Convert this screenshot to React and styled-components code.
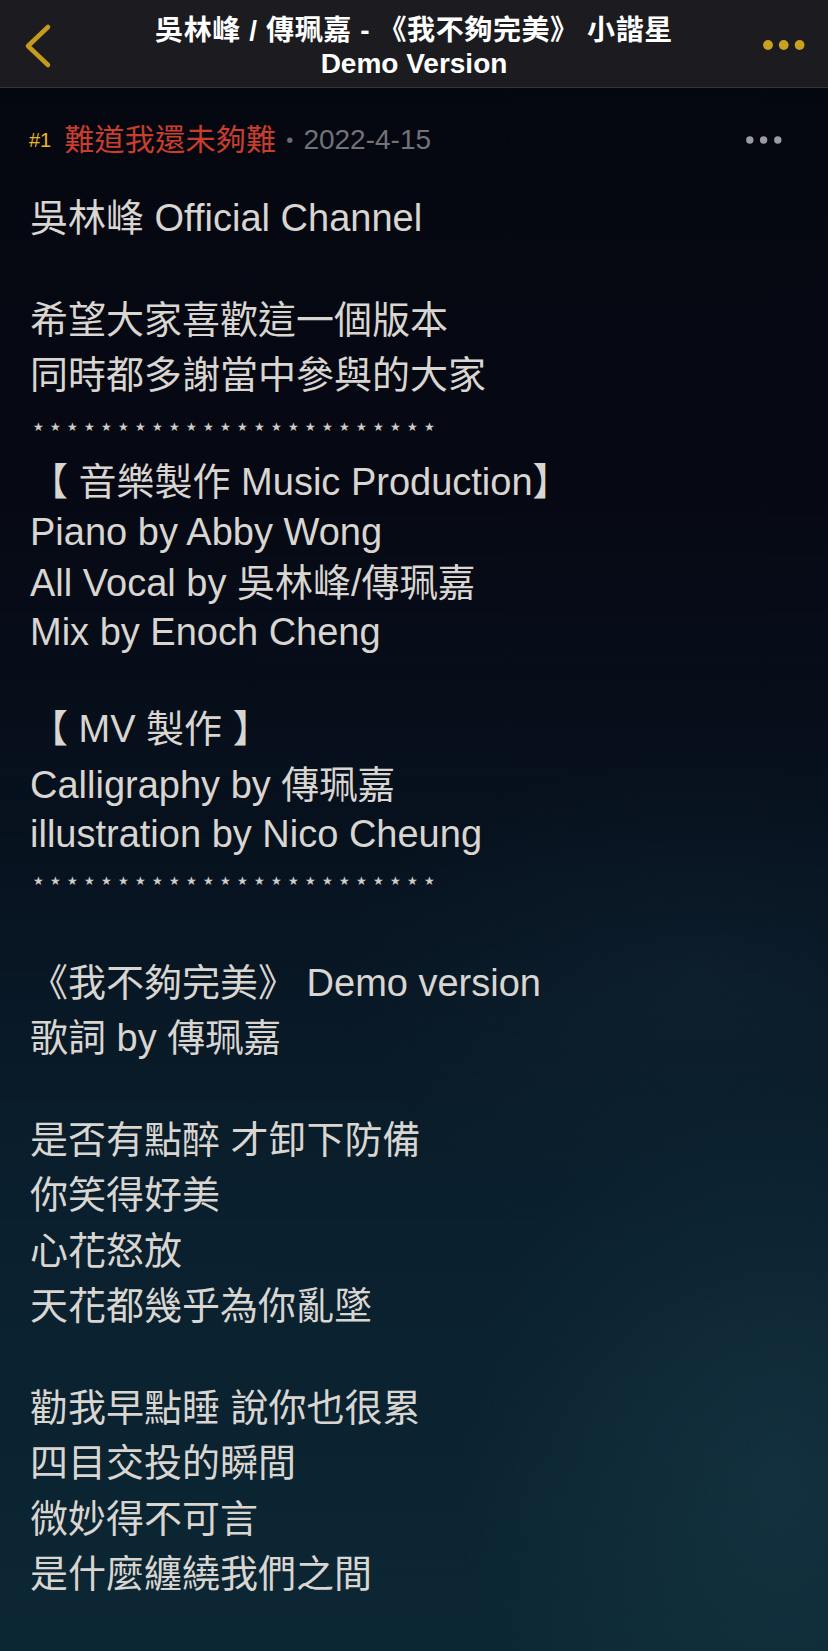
import React from "react";
import styled, { createGlobalStyle } from "styled-components";

const GlobalStyle = createGlobalStyle`
  html, body { margin: 0; padding: 0; background: #06080f; }
  body { font-family: "Liberation Sans", "Noto Sans CJK TC", sans-serif; }
  * { box-sizing: border-box; }
`;

const Page = styled.div`
  width: 828px;
  min-height: 1651px;
  display: flex;
  flex-direction: column;
  background:
    radial-gradient(ellipse 460px 560px at 780px 1480px, rgba(38, 78, 92, 0.3), transparent 70%),
    radial-gradient(ellipse 520px 320px at 700px 980px, rgba(40, 70, 88, 0.15), transparent 70%),
    linear-gradient(180deg, #05070f 0%, #060914 30%, #07121f 52%, #0a1f2d 72%, #0c2734 100%);
`;

const Header = styled.header`
  height: 88px;
  flex: none;
  background: #1c1c20;
  border-bottom: 1px solid #34343a;
  display: grid;
  grid-template-columns: 90px 1fr 90px;
  align-items: start;
`;

const IconButton = styled.button`
  background: none;
  border: 0;
  padding: 0;
  display: flex;
  cursor: pointer;
  justify-self: ${(p) => (p.$end ? "end" : "start")};
  margin: ${(p) => p.$margin};
`;

const Title = styled.h1`
  margin: 14px 0 0;
  text-align: center;
  color: #ffffff;
  font-size: 28px;
  font-weight: 700;
  line-height: 33px;
  white-space: nowrap;
`;

const TitleMain = styled.span`
  letter-spacing: 0.6px;
`;

const Main = styled.main`
  padding: 0 30px 0 0;
  display: flex;
  flex-direction: column;
`;

const MetaRow = styled.div`
  display: flex;
  align-items: center;
  height: 46px;
  margin-top: 29px;
  padding-left: 29px;
`;

const FloorTag = styled.span`
  color: #e9b824;
  font-size: 20px;
  margin-right: 13px;
`;

const Author = styled.span`
  color: #c93d2c;
  font-size: 30px;
  line-height: 40px;
  letter-spacing: 0.3px;
`;

const Bullet = styled.span`
  color: #6b6b70;
  font-size: 20px;
  margin: 0 10px 0 10px;
`;

const DateText = styled.span`
  color: #727277;
  font-size: 28px;
`;

const MetaMore = styled.button`
  margin-left: auto;
  margin-right: 16px;
  background: none;
  border: 0;
  padding: 0;
  display: flex;
`;

const Body = styled.div`
  margin-top: 27px;
  padding-left: 30px;
  color: #d9d5d0;
  font-size: 38px;
  display: flex;
  flex-direction: column;
`;

const KIND = {
  c: { h: 55.5, pad: "5px 0 4.5px", lh: 46 },
  l: { h: 45, pad: "0", lh: 45 },
  b: { h: 46, pad: "0", lh: 46 },
};

const Line = styled.div`
  height: ${(p) => KIND[p.$kind].h}px;
  padding: ${(p) => KIND[p.$kind].pad};
  line-height: ${(p) => KIND[p.$kind].lh}px;
  white-space: pre;
`;

const StarRow = styled.div`
  height: 51.5px;
  padding: 1px 0 4.5px;
  display: flex;
  align-items: center;
`;

const Star = styled.span`
  width: 17px;
  text-align: center;
  font-family: "DejaVu Sans", sans-serif;
  font-size: 12px;
  line-height: 12px;
  color: #cfcbc6;
`;

const lines = [
  { k: "c", t: "吳林峰 Official Channel" },
  { k: "b" },
  { k: "c", t: "希望大家喜歡這一個版本" },
  { k: "c", t: "同時都多謝當中參與的大家" },
  { k: "s" },
  { k: "c", t: "【 音樂製作 Music Production】" },
  { k: "l", t: "Piano by Abby Wong" },
  { k: "c", t: "All Vocal by 吳林峰/傳珮嘉" },
  { k: "l", t: "Mix by Enoch Cheng" },
  { k: "b" },
  { k: "c", t: "【 MV 製作 】" },
  { k: "c", t: "Calligraphy by 傳珮嘉" },
  { k: "l", t: "illustration by Nico Cheung" },
  { k: "s" },
  { k: "b" },
  { k: "c", t: "《我不夠完美》 Demo version" },
  { k: "c", t: "歌詞 by 傳珮嘉" },
  { k: "b" },
  { k: "c", t: "是否有點醉 才卸下防備" },
  { k: "c", t: "你笑得好美" },
  { k: "c", t: "心花怒放" },
  { k: "c", t: "天花都幾乎為你亂墜" },
  { k: "b" },
  { k: "c", t: "勸我早點睡 說你也很累" },
  { k: "c", t: "四目交投的瞬間" },
  { k: "c", t: "微妙得不可言" },
  { k: "c", t: "是什麼纏繞我們之間" },
];

const Stars = () => (
  <StarRow>
    {Array.from({ length: 24 }, (_, i) => (
      <Star key={i}>★</Star>
    ))}
  </StarRow>
);

export default function App() {
  return (
    <>
      <GlobalStyle />
      <Page>
        <Header>
          <IconButton $margin="23px 0 0 22px" aria-label="back">
            <svg width="32" height="46" viewBox="0 0 32 46">
              <path
                d="M26 4 L6 23 L26 42"
                fill="none"
                stroke="#c49a1f"
                strokeWidth="4.5"
                strokeLinecap="round"
                strokeLinejoin="round"
              />
            </svg>
          </IconButton>
          <Title>
            <TitleMain>吳林峰 / 傳珮嘉 - 《我不夠完美》 小諧星</TitleMain>
            <br />
            Demo Version
          </Title>
          <IconButton $end $margin="40px 23px 0 0" aria-label="more">
            <svg width="42" height="10" viewBox="0 0 42 10">
              <circle cx="5" cy="5" r="4.9" fill="#c9a01f" />
              <circle cx="20.7" cy="5" r="4.9" fill="#c9a01f" />
              <circle cx="36.6" cy="5" r="4.9" fill="#c9a01f" />
            </svg>
          </IconButton>
        </Header>
        <Main>
          <MetaRow>
            <FloorTag>#1</FloorTag>
            <Author>難道我還未夠難</Author>
            <Bullet>•</Bullet>
            <DateText>2022-4-15</DateText>
            <MetaMore aria-label="post options">
              <svg width="36" height="8" viewBox="0 0 36 8">
                <circle cx="3.8" cy="4" r="3.7" fill="#9b9ba0" />
                <circle cx="17.6" cy="4" r="3.7" fill="#9b9ba0" />
                <circle cx="31.8" cy="4" r="3.7" fill="#9b9ba0" />
              </svg>
            </MetaMore>
          </MetaRow>
          <Body>
            {lines.map((l, i) =>
              l.k === "s" ? (
                <Stars key={i} />
              ) : (
                <Line key={i} $kind={l.k}>
                  {l.t || ""}
                </Line>
              )
            )}
          </Body>
        </Main>
      </Page>
    </>
  );
}
